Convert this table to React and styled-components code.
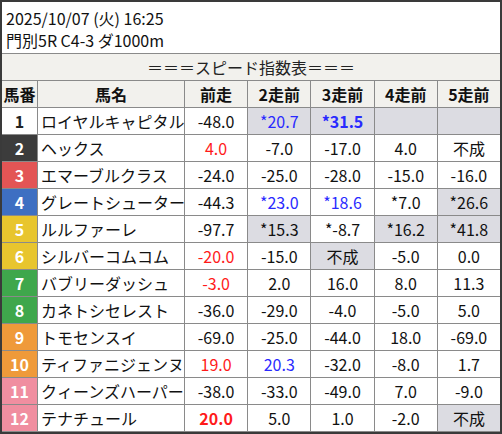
import React from "react";
import styled, { createGlobalStyle } from "styled-components";

const GlobalStyle = createGlobalStyle`
  html, body {
    margin: 0;
    padding: 0;
    background: #ffffff;
  }
  body {
    font-family: "Noto Sans CJK JP", "Noto Sans", sans-serif;
    color: #111;
  }
`;

const WAKU = {
  1: { bg: "#ffffff", fg: "#222" },
  2: { bg: "#3c3c3c", fg: "#fff" },
  3: { bg: "#e35555", fg: "#fff" },
  4: { bg: "#3e6fc2", fg: "#fff" },
  5: { bg: "#e8c52e", fg: "#fff" },
  6: { bg: "#e8c52e", fg: "#fff" },
  7: { bg: "#3fa74c", fg: "#fff" },
  8: { bg: "#3fa74c", fg: "#fff" },
  9: { bg: "#ef9a3a", fg: "#fff" },
  10: { bg: "#ef9a3a", fg: "#fff" },
  11: { bg: "#f08ea0", fg: "#fff" },
  12: { bg: "#f08ea0", fg: "#fff" },
};

// v: text, c: color (r/b), g: gray cell, w: bold
const rows = [
  { no: 1, name: "ロイヤルキャピタル", runs: [{ v: "-48.0" }, { v: "*20.7", c: "b", g: 1 }, { v: "*31.5", c: "b", g: 1, w: 1 }, { v: "", g: 1 }, { v: "", g: 1 }] },
  { no: 2, name: "ヘックス", runs: [{ v: "4.0", c: "r" }, { v: "-7.0" }, { v: "-17.0" }, { v: "4.0" }, { v: "不成" }] },
  { no: 3, name: "エマーブルクラス", runs: [{ v: "-24.0" }, { v: "-25.0" }, { v: "-28.0" }, { v: "-15.0" }, { v: "-16.0" }] },
  { no: 4, name: "グレートシューター", runs: [{ v: "-44.3" }, { v: "*23.0", c: "b" }, { v: "*18.6", c: "b" }, { v: "*7.0" }, { v: "*26.6", g: 1 }] },
  { no: 5, name: "ルルファーレ", runs: [{ v: "-97.7" }, { v: "*15.3", g: 1 }, { v: "*-8.7" }, { v: "*16.2", g: 1 }, { v: "*41.8", g: 1 }] },
  { no: 6, name: "シルバーコムコム", runs: [{ v: "-20.0", c: "r" }, { v: "-15.0" }, { v: "不成", g: 1 }, { v: "-5.0" }, { v: "0.0" }] },
  { no: 7, name: "バブリーダッシュ", runs: [{ v: "-3.0", c: "r" }, { v: "2.0" }, { v: "16.0" }, { v: "8.0" }, { v: "11.3" }] },
  { no: 8, name: "カネトシセレスト", runs: [{ v: "-36.0" }, { v: "-29.0" }, { v: "-4.0" }, { v: "-5.0" }, { v: "5.0" }] },
  { no: 9, name: "トモセンスイ", runs: [{ v: "-69.0" }, { v: "-25.0" }, { v: "-44.0" }, { v: "18.0" }, { v: "-69.0" }] },
  { no: 10, name: "ティファニジェンヌ", runs: [{ v: "19.0", c: "r" }, { v: "20.3", c: "b" }, { v: "-32.0" }, { v: "-8.0" }, { v: "1.7" }] },
  { no: 11, name: "クィーンズハーパー", runs: [{ v: "-38.0" }, { v: "-33.0" }, { v: "-49.0" }, { v: "7.0" }, { v: "-9.0" }] },
  { no: 12, name: "テナチュール", runs: [{ v: "20.0", c: "r", w: 1 }, { v: "5.0" }, { v: "1.0" }, { v: "-2.0" }, { v: "不成", g: 1 }] },
];

const heads = ["馬番", "馬名", "前走", "2走前", "3走前", "4走前", "5走前"];

const INK = { r: "#ff1a1a", b: "#2a2aff" };

export default function App() {
  return (
    <>
      <GlobalStyle />
      <Frame>
        <Info>
          <div>2025/10/07 (火) 16:25</div>
          <div>門別5R C4-3 ダ1000m</div>
        </Info>
        <Title>＝＝＝スピード指数表＝＝＝</Title>
        <Grid>
          {heads.map((h) => (
            <Head key={h}>{h}</Head>
          ))}
          {rows.map((r) => (
            <React.Fragment key={r.no}>
              <Waku $bg={WAKU[r.no].bg} $fg={WAKU[r.no].fg}>
                {r.no}
              </Waku>
              <Name>{r.name}</Name>
              {r.runs.map((s, i) => (
                <Score key={i} $gray={s.g} $ink={INK[s.c]} $bold={s.w}>
                  {s.v}
                </Score>
              ))}
            </React.Fragment>
          ))}
        </Grid>
      </Frame>
    </>
  );
}

const Frame = styled.div`
  width: 502px;
  height: 434px;
  box-sizing: border-box;
  border: 2px solid #3a3a3a;
  display: flex;
  flex-direction: column;
  background: #8a8a8a;
  gap: 1px;
`;

const Info = styled.div`
  background: #fff;
  height: 51px;
  box-sizing: border-box;
  padding: 5px 0 0 4px;
  font-size: 16px;
  line-height: 22px;
  color: #111;
`;

const Title = styled.div`
  background: #f2f1ed;
  height: 26px;
  display: flex;
  align-items: center;
  justify-content: center;
  font-size: 16px;
  color: #222;
`;

const Grid = styled.div`
  display: grid;
  grid-template-columns: 35px 146px repeat(5, 1fr);
  grid-auto-rows: 26px;
  gap: 1px;
  flex: 1;
`;

const Cell = styled.div`
  display: flex;
  align-items: center;
  justify-content: center;
  font-size: 16px;
  white-space: nowrap;
  overflow: hidden;
`;

const Head = styled(Cell)`
  background: #f2f1ed;
  font-weight: 700;
  color: #111;
`;

const Waku = styled(Cell)`
  background: ${(p) => p.$bg};
  color: ${(p) => p.$fg};
  font-weight: 700;
`;

const Name = styled(Cell)`
  background: #fff;
  justify-content: flex-start;
  padding-left: 3px;
  color: #111;
`;

const Score = styled(Cell)`
  background: ${(p) => (p.$gray ? "#dcdce2" : "#fff")};
  color: ${(p) => p.$ink || "#111"};
  font-weight: ${(p) => (p.$bold ? 700 : 400)};
`;
